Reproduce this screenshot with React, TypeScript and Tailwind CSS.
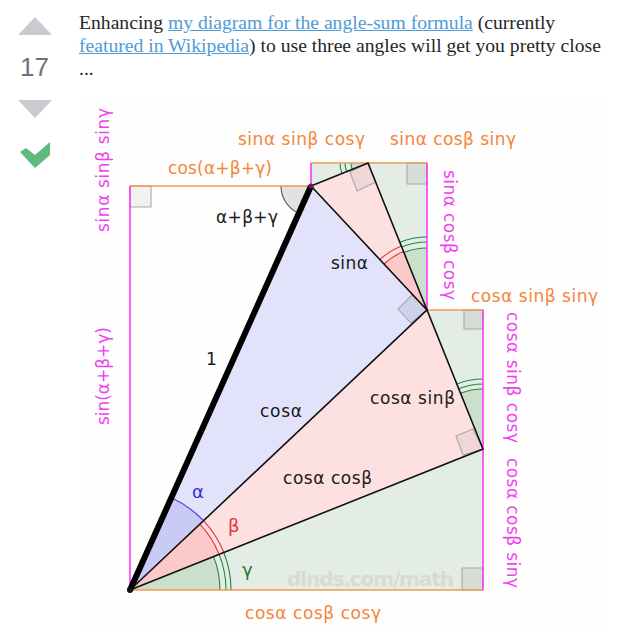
type Pt = [number, number];

const O: Pt = [130, 590];
const P: Pt = [311, 186];
const Q: Pt = [368, 163];
const R: Pt = [427, 310];
const S: Pt = [483, 449];

const ORANGE = '#f29b4c';
const LABEL_ORANGE = '#f5863a';
const MAGENTA = '#fb3cf5';
const LABEL_MAGENTA = '#f03ff0';
const GREEN_FILL = '#e4ede5';
const GREEN_WEDGE = '#cbdfcc';
const PINK_FILL = '#fde0e0';
const PINK_WEDGE = '#fcc9c9';
const BLUE_FILL = '#e2e3fa';
const BLUE_WEDGE = '#c9cbf4';

// point at distance r from c, heading towards p
function along(c: Pt, p: Pt, r: number): Pt {
  const d = Math.hypot(p[0] - c[0], p[1] - c[1]);
  return [c[0] + ((p[0] - c[0]) * r) / d, c[1] + ((p[1] - c[1]) * r) / d];
}

function arc(c: Pt, from: Pt, to: Pt, r: number) {
  const a = along(c, from, r);
  const b = along(c, to, r);
  return `M${a[0]} ${a[1]}A${r} ${r} 0 0 1 ${b[0]} ${b[1]}`;
}

function wedge(c: Pt, from: Pt, to: Pt, r: number) {
  return `M${c[0]} ${c[1]}L${arc(c, from, to, r).slice(1)}Z`;
}

function Angle({ c, from, to, fill, stroke, radii }: { c: Pt; from: Pt; to: Pt; fill: string; stroke: string; radii: number[] }) {
  return (
    <>
      <path d={wedge(c, from, to, radii[0])} fill={fill} />
      {radii.map((r) => (
        <path key={r} d={arc(c, from, to, r)} fill="none" stroke={stroke} strokeWidth={1.1} />
      ))}
    </>
  );
}

function Label({ x, y, w, color, size = 17, children }: { x: number; y: number; w: number; color: string; size?: number; children: string }) {
  return (
    <text x={x} y={y} fill={color} fontSize={size} textLength={w} lengthAdjust="spacing">
      {children}
    </text>
  );
}

function SideLabel({ x, y, w, up, children }: { x: number; y: number; w: number; up?: boolean; children: string }) {
  return (
    <text
      transform={`translate(${x} ${y}) rotate(${up ? -90 : 90})`}
      fill={LABEL_MAGENTA}
      fontSize={17}
      textLength={w}
      lengthAdjust="spacing"
    >
      {children}
    </text>
  );
}

function Marker({ points, fill }: { points: string; fill: string }) {
  return <polygon points={points} fill={fill} stroke="#a8a8a8" strokeWidth={1.1} />;
}

function Diagram() {
  return (
    <svg viewBox="80 97 528 533" width={528} height={533} className="block" style={{ fontFamily: '"DejaVu Sans", sans-serif' }}>
      <rect x={80} y={97} width={528} height={533} fill="#fefefe" />

      <polygon points={`311,163 ${Q} ${P}`} fill={GREEN_FILL} />
      <polygon points={`${Q} 427,163 ${R}`} fill={GREEN_FILL} />
      <polygon points={`${R} 483,310 ${S}`} fill={GREEN_FILL} />
      <polygon points={`${O} ${S} 483,590`} fill={GREEN_FILL} />
      <polygon points={`${P} ${Q} ${R}`} fill={PINK_FILL} />
      <polygon points={`${O} ${R} ${S}`} fill={PINK_FILL} />
      <polygon points={`${O} ${P} ${R}`} fill={BLUE_FILL} />

      <Angle c={O} from={P} to={R} fill={BLUE_WEDGE} stroke="#3a3ae0" radii={[101]} />
      <Angle c={O} from={R} to={S} fill={PINK_WEDGE} stroke="#e8303c" radii={[96, 101]} />
      <Angle c={O} from={S} to={[483, 590]} fill={GREEN_WEDGE} stroke="#1f8a3c" radii={[90, 96, 101]} />
      <Angle c={R} from={P} to={Q} fill={PINK_WEDGE} stroke="#e8303c" radii={[63, 69]} />
      <Angle c={R} from={Q} to={[427, 163]} fill={GREEN_WEDGE} stroke="#1f8a3c" radii={[62, 68, 73]} />
      <Angle c={Q} from={P} to={[311, 163]} fill={GREEN_WEDGE} stroke="#1f8a3c" radii={[17, 23, 28]} />
      <Angle c={S} from={R} to={[483, 310]} fill={GREEN_WEDGE} stroke="#1f8a3c" radii={[60, 65, 70]} />
      <Angle c={P} from={O} to={[130, 186]} fill="#e2e2e2" stroke="#555555" radii={[30]} />

      <Marker points="130,186 151,186 151,207 130,207" fill="#f1f1f1" />
      <Marker points="427,163 407,163 407,184 427,184" fill="#d5ddd6" />
      <Marker points="483,310 464,310 464,329 483,329" fill="#d5ddd6" />
      <Marker points="483,590 462,590 462,568 483,568" fill="#d5ddd6" />
      <Marker points="368,163 350,172 357,191 376,182" fill="#efd7d7" />
      <Marker points="427,310 412,295 398,309 411,323" fill="#cfd2ea" />
      <Marker points="483,449 473,429 456,436 463,455" fill="#efd7d7" />

      <g fill="none" strokeWidth={1.6}>
        <path d="M130 186H311M311 163H427M427 310H483M130 590H483" stroke={ORANGE} />
        <path d="M130 186V590M311 163V186M427 163V310M483 310V590" stroke={MAGENTA} />
      </g>

      <g fill="none" stroke="#111111" strokeWidth={1.6}>
        <path d={`M${P}L${Q}L${R}L${P}`} />
        <path d={`M${O}L${R}L${S}L${O}`} />
      </g>
      <line x1={O[0]} y1={O[1]} x2={P[0]} y2={P[1]} stroke="#000000" strokeWidth={6} />
      <circle cx={O[0]} cy={O[1]} r={3} fill="#111111" />
      <circle cx={P[0]} cy={P[1]} r={2.5} fill="#6b1466" />

      <text x={287} y={586} fill="#d5dcd6" fontSize={20} fontWeight={700} textLength={167} lengthAdjust="spacing">
        dlnds.com/math
      </text>

      <Label x={238} y={145} w={127} color={LABEL_ORANGE}>sinα sinβ cosγ</Label>
      <Label x={390} y={145} w={126} color={LABEL_ORANGE}>sinα cosβ sinγ</Label>
      <Label x={168} y={174} w={104} color={LABEL_ORANGE}>cos(α+β+γ)</Label>
      <Label x={471} y={302} w={127} color={LABEL_ORANGE}>cosα sinβ sinγ</Label>
      <Label x={245} y={619} w={136} color={LABEL_ORANGE}>cosα cosβ cosγ</Label>

      <Label x={216} y={223} w={62} color="#1a1a1a">α+β+γ</Label>
      <Label x={331} y={269} w={37} color="#1a1a1a">sinα</Label>
      <Label x={206} y={365} w={9} color="#1a1a1a">1</Label>
      <Label x={260} y={417} w={42} color="#1a1a1a">cosα</Label>
      <Label x={370} y={404} w={85} color="#1a1a1a">cosα sinβ</Label>
      <Label x={283} y={484} w={89} color="#1a1a1a">cosα cosβ</Label>

      <Label x={192} y={498} w={12} size={18} color="#3030e0">α</Label>
      <Label x={228} y={532} w={10} size={18} color="#e8303c">β</Label>
      <Label x={242} y={576} w={12} size={18} color="#1c7a34">γ</Label>

      <SideLabel x={109} y={232} w={124} up>sinα sinβ sinγ</SideLabel>
      <SideLabel x={109} y={425} w={98} up>sin(α+β+γ)</SideLabel>
      <SideLabel x={444} y={170} w={130}>sinα cosβ cosγ</SideLabel>
      <SideLabel x={507} y={312} w={131}>cosα sinβ cosγ</SideLabel>
      <SideLabel x={507} y={458} w={130}>cosα cosβ sinγ</SideLabel>
    </svg>
  );
}

function VoteColumn() {
  return (
    <div className="mr-[10px] flex w-[69px] shrink-0 flex-col items-center pt-[17px]">
      <svg width={34} height={18} viewBox="0 0 34 18" className="block">
        <polygon points="17,0 34,18 0,18" fill="#c8cbcf" />
      </svg>
      <div className="mt-[16px] h-[32px] text-center text-[26px] leading-[32px] text-[#6a737c] font-['Liberation_Sans',sans-serif]">
        17
      </div>
      <svg width={34} height={18} viewBox="0 0 34 18" className="mt-[17px] block">
        <polygon points="0,0 34,0 17,18" fill="#c8cbcf" />
      </svg>
      <svg width={30} height={27} viewBox="0 0 30 27" className="mt-[24px] block">
        <polygon points="0,10 6,6 15,13 30,0 30,13 15,26" fill="#5eba7d" />
      </svg>
    </div>
  );
}

export default function App() {
  return (
    <div className="flex h-[639px] w-[620px] overflow-hidden bg-white">
      <VoteColumn />
      <div className="min-w-0 flex-1 pt-[11px]">
        <p className="text-[19.65px] leading-[23px] whitespace-nowrap text-[#242729] font-['Liberation_Serif',serif]">
          Enhancing{' '}
          <a href="#" className="text-[#4f9bd5] underline">
            my diagram for the angle-sum formula
          </a>{' '}
          (currently
          <br />
          <a href="#" className="text-[#4f9bd5] underline">
            featured in Wikipedia
          </a>
          ) to use three angles will get you pretty close
          <br />
          ...
        </p>
        <div className="mt-[17px] ml-[1px]">
          <Diagram />
        </div>
      </div>
    </div>
  );
}
